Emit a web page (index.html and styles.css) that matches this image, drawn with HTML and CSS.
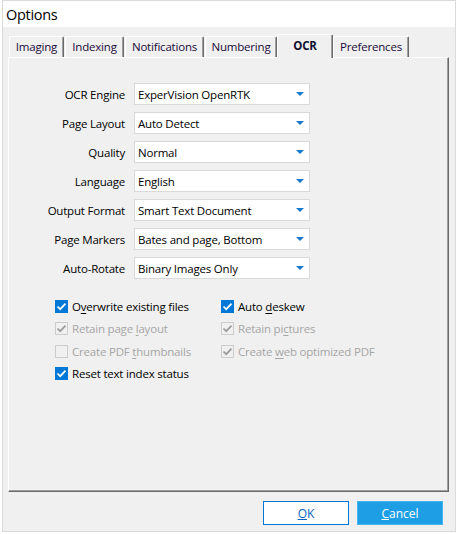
FILE: index.html
```html
<!DOCTYPE html>
<html>
<head>
<meta charset="utf-8">
<link rel="stylesheet" href="styles.css">
</head>
<body>
<div class="window">
  <div class="titlebar">Options</div>
  <div class="content">
    <div class="tabs">
      <div class="tab t-imaging">Imaging</div>
      <div class="tab t-indexing">Indexing</div>
      <div class="tab t-notif">Notifications</div>
      <div class="tab t-numbering">Numbering</div>
      <div class="tab t-ocr selected">OCR</div>
      <div class="tab t-prefs">Preferences</div>
    </div>
    <div class="panel">
      <div class="form">
        <label class="lbl">OCR Engine</label>
        <div class="select"><span>ExperVision OpenRTK</span><i class="arrow"></i></div>
        <label class="lbl">Page Layout</label>
        <div class="select"><span>Auto Detect</span><i class="arrow"></i></div>
        <label class="lbl">Quality</label>
        <div class="select"><span>Normal</span><i class="arrow"></i></div>
        <label class="lbl">Language</label>
        <div class="select"><span>English</span><i class="arrow"></i></div>
        <label class="lbl">Output Format</label>
        <div class="select"><span>Smart Text Document</span><i class="arrow"></i></div>
        <label class="lbl">Page Markers</label>
        <div class="select"><span>Bates and page, Bottom</span><i class="arrow"></i></div>
        <label class="lbl">Auto-Rotate</label>
        <div class="select"><span>Binary Images Only</span><i class="arrow"></i></div>
      </div>
      <div class="checks">
        <div class="chk on"><span class="box"><svg viewBox="0 0 13 13"><path d="M2.5 6.5 L5.2 9.2 L10.5 3.6"/></svg></span><span>O<u>v</u>erwrite existing files</span></div>
        <div class="chk on"><span class="box"><svg viewBox="0 0 13 13"><path d="M2.5 6.5 L5.2 9.2 L10.5 3.6"/></svg></span><span>Auto <u>d</u>eskew</span></div>
        <div class="chk dis checked"><span class="box"><svg viewBox="0 0 13 13"><path d="M2.5 6.5 L5.2 9.2 L10.5 3.6"/></svg></span><span>Retain page <u>l</u>ayout</span></div>
        <div class="chk dis checked"><span class="box"><svg viewBox="0 0 13 13"><path d="M2.5 6.5 L5.2 9.2 L10.5 3.6"/></svg></span><span>Retain pi<u>c</u>tures</span></div>
        <div class="chk dis"><span class="box"></span><span>Create PDF <u>t</u>humbnails</span></div>
        <div class="chk dis checked"><span class="box"><svg viewBox="0 0 13 13"><path d="M2.5 6.5 L5.2 9.2 L10.5 3.6"/></svg></span><span>Create <u>w</u>eb optimized PDF</span></div>
        <div class="chk on"><span class="box"><svg viewBox="0 0 13 13"><path d="M2.5 6.5 L5.2 9.2 L10.5 3.6"/></svg></span><span>Reset text index status</span></div>
      </div>
    </div>
    <div class="buttons">
      <button class="btn ok"><u>O</u>K</button>
      <button class="btn cancel"><u>C</u>ancel</button>
    </div>
  </div>
</div>
</body>
</html>
```

FILE: styles.css
```css
html, body {
  margin: 0;
  padding: 0;
  background: #ffffff;
}
body {
  font-family: "Open Sans", "Noto Sans", sans-serif;
  font-size: 11.5px;
  letter-spacing: -0.2px;
  color: #000;
}
.window {
  margin: 0 2px;
  width: 452px;
  height: 530px;
  border: 1px solid #dadada;
  display: flex;
  flex-direction: column;
}
.titlebar {
  height: 26px;
  background: #fff;
  font-size: 14.5px;
  letter-spacing: -0.3px;
  line-height: 28px;
  padding-left: 3px;
  flex: none;
}
.content {
  flex: 1;
  background: #f0f0f0;
  padding-top: 7px;
  display: flex;
  flex-direction: column;
}
.tabs {
  display: flex;
  align-items: flex-end;
  height: 23px;
  margin-left: 6px;
}
.tab {
  box-sizing: border-box;
  height: 21px;
  line-height: 20px;
  text-align: center;
  border-top: 1px solid #ffffff;
  border-left: 1px solid #ffffff;
  border-right: 1px solid #696969;
  box-shadow: inset -1px 0 0 #a0a0a0;
  border-radius: 2px 2px 0 0;
  color: #1a0a3a;
  white-space: nowrap;
  margin-right: 1px;
}
.t-imaging { width: 55px; }
.t-indexing { width: 59px; }
.t-notif { width: 79px; }
.t-numbering { width: 72px; margin-right: 0; }
.t-ocr { width: 56px; }
.t-prefs { width: 76px; }
.tab.selected {
  height: 24px;
  margin-bottom: -1px;
  position: relative;
  z-index: 1;
  background: #f0f0f0;
  font-weight: bold;
  line-height: 21px;
  color: #101030;
  margin-right: 0;
}
.panel {
  box-sizing: border-box;
  height: 435px;
  margin-left: 5px;
  margin-right: 6px;
  border-top: 1px solid #ffffff;
  border-left: 1px solid #ffffff;
  border-right: 1px solid #696969;
  border-bottom: 1px solid #696969;
  box-shadow: inset -1px -1px 0 #a0a0a0;
  padding-top: 25px;
}
.form {
  display: grid;
  grid-template-columns: 116px 176px;
  column-gap: 9px;
  row-gap: 7px;
  grid-auto-rows: 22px;
}
.lbl {
  text-align: right;
  align-self: center;
  white-space: nowrap;
}
.select {
  box-sizing: border-box;
  background: #fff;
  border: 1px solid #d9d9d9;
  display: flex;
  align-items: center;
  justify-content: space-between;
  padding: 0 5px 0 3px;
}
.arrow {
  width: 0;
  height: 0;
  border-left: 4px solid transparent;
  border-right: 4px solid transparent;
  border-top: 4px solid #1979ca;
}
.checks {
  margin-top: 16px;
  margin-left: 46px;
  display: grid;
  grid-template-columns: 166px 200px;
  grid-auto-rows: 22.5px;
}
.chk {
  display: flex;
  align-items: center;
  gap: 4px;
  white-space: nowrap;
}
.chk u { text-decoration-thickness: 1px; text-underline-offset: 2px; }
.box {
  box-sizing: border-box;
  width: 13px;
  height: 13px;
  flex: none;
  display: flex;
}
.box svg {
  width: 13px;
  height: 13px;
}
.box path {
  fill: none;
  stroke-width: 1.7;
}
.chk.on .box {
  background: #0078d7;
}
.chk.on .box path {
  stroke: #ffffff;
}
.chk.dis {
  color: #a6a6a6;
}
.chk.dis .box {
  border: 1px solid #cccccc;
  background: #f0f0f0;
}
.chk.dis .box svg {
  margin: -1px;
}
.chk.dis .box path {
  stroke: #9a9a9a;
}
.buttons {
  display: flex;
  justify-content: flex-end;
  gap: 8px;
  margin-top: 9px;
  padding-right: 12px;
}
.btn {
  box-sizing: border-box;
  width: 86px;
  height: 24px;
  font-family: inherit;
  font-size: 12px;
  padding: 0;
  cursor: default;
}
.btn.ok {
  background: #ffffff;
  border: 1px solid #0078d7;
  color: #0b64c0;
}
.btn.cancel {
  background: #1d9ee5;
  border: 1px solid #46b4ef;
  color: #ffffff;
}
```
